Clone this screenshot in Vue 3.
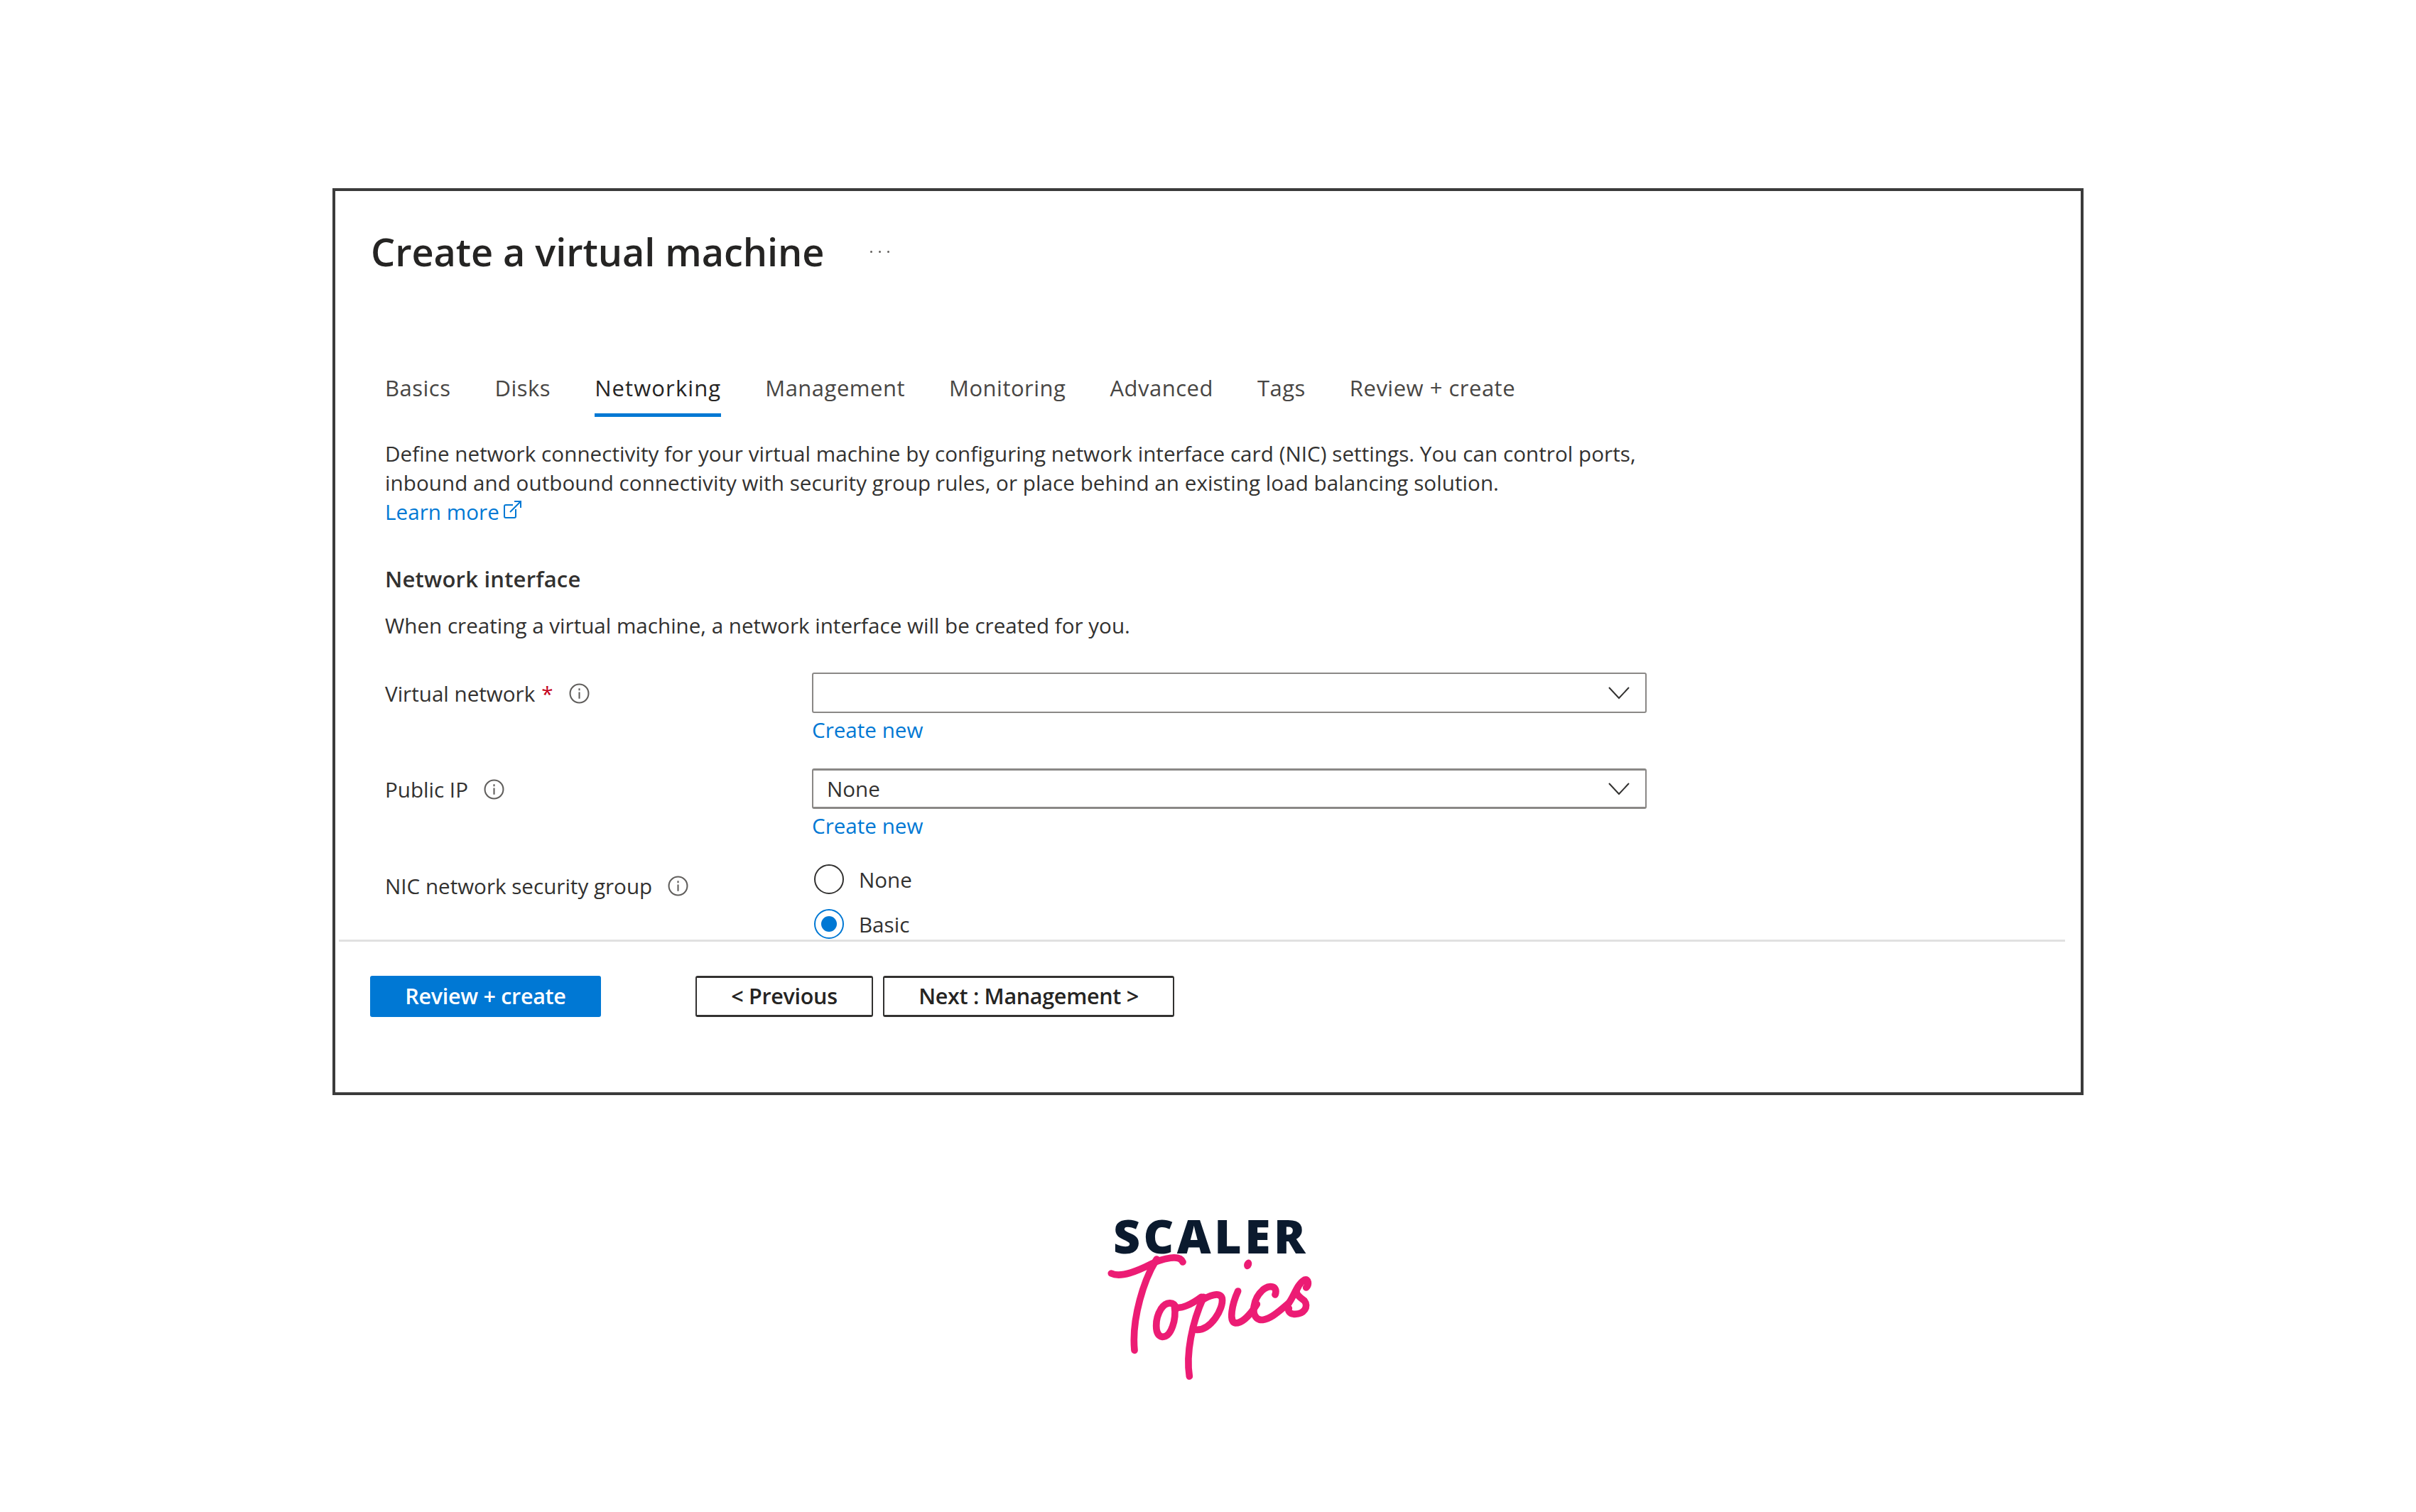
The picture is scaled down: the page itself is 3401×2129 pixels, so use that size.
<template>
  <div class="page">
    <div class="frame">
      <div class="title-row">
        <h1 class="title">Create a virtual machine</h1>
        <span class="more"><i></i><i></i><i></i></span>
      </div>

      <nav class="tabs">
        <span
          v-for="tab in tabs"
          :key="tab"
          class="tab"
          :class="{ active: tab === 'Networking' }"
        >{{ tab }}</span>
      </nav>

      <div class="scroll">
        <p class="intro">
          Define network connectivity for your virtual machine by configuring network interface card (NIC) settings. You can control ports,<br />
          inbound and outbound connectivity with security group rules, or place behind an existing load balancing solution.<br />
          <a class="link">Learn more</a>
          <svg class="ext" viewBox="0 0 25 25" fill="none" stroke="#0078d4" stroke-width="2">
            <path d="M13 6H3a2 2 0 0 0-2 2v14a2 2 0 0 0 2 2h12a2 2 0 0 0 2-2V12" />
            <path d="M9 16 23 2M15 1h9v9" />
          </svg>
        </p>

        <h2 class="section">Network interface</h2>
        <p class="section-note">When creating a virtual machine, a network interface will be created for you.</p>

        <div class="row first">
          <div class="label">
            Virtual network <span class="star">*</span>
            <svg class="info" viewBox="0 0 28 28" fill="none" stroke="#605e5c" stroke-width="2">
              <circle cx="14" cy="14" r="12.5" />
              <path d="M14 12v9M14 7v3" />
            </svg>
          </div>
          <div class="control">
            <div class="select">
              <span></span>
              <svg class="chev" viewBox="0 0 30 18" fill="none" stroke="#323130" stroke-width="2">
                <path d="M1 1l14 15L29 1" />
              </svg>
            </div>
            <a class="link create">Create new</a>
          </div>
        </div>

        <div class="row second">
          <div class="label">
            Public IP
            <svg class="info" viewBox="0 0 28 28" fill="none" stroke="#605e5c" stroke-width="2">
              <circle cx="14" cy="14" r="12.5" />
              <path d="M14 12v9M14 7v3" />
            </svg>
          </div>
          <div class="control">
            <div class="select heavy">
              <span>None</span>
              <svg class="chev" viewBox="0 0 30 18" fill="none" stroke="#323130" stroke-width="2">
                <path d="M1 1l14 15L29 1" />
              </svg>
            </div>
            <a class="link create">Create new</a>
          </div>
        </div>

        <div class="row third">
          <div class="label radio-label">
            NIC network security group
            <svg class="info" viewBox="0 0 28 28" fill="none" stroke="#605e5c" stroke-width="2">
              <circle cx="14" cy="14" r="12.5" />
              <path d="M14 12v9M14 7v3" />
            </svg>
          </div>
          <div class="radios">
            <div class="radio"><span class="dot"></span>None</div>
            <div class="radio on"><span class="dot"></span>Basic</div>
          </div>
        </div>
      </div>

      <div class="footer">
        <button class="btn primary">Review + create</button>
        <button class="btn prev">&lt; Previous</button>
        <button class="btn next">Next : Management &gt;</button>
      </div>
    </div>

    <div class="logo">
      <div class="scaler">SCALER</div>
      <svg class="topics" viewBox="0 0 1080 660" fill="none" stroke="#ec1c74" stroke-width="29" stroke-linecap="round" stroke-linejoin="round">
        <path d="M130 90C170 110 240 80 300 50C350 25 420 10 432 42" />
        <path d="M322 30C270 110 215 280 228 415" />
        <path d="M405 240C395 205 360 210 340 240C315 280 310 350 345 358C385 360 405 280 397 230C420 245 470 220 510 190" />
        <path d="M520 190C470 300 445 430 460 525" />
        <path d="M510 205C540 185 590 165 598 195C605 240 550 330 490 328" />
        <path d="M665 165C640 220 625 295 655 300C685 300 720 260 745 220" />
        <ellipse cx="707" cy="52" rx="16" ry="21" transform="rotate(20 707 52)" fill="#ec1c74" stroke="none" />
        <path d="M822 180C835 145 800 135 770 160C730 195 715 270 755 285C790 295 840 250 880 215" />
        <path d="M880 215C900 190 915 135 945 118C965 110 965 140 953 150" />
        <path d="M918 150C900 175 925 190 945 205C965 230 945 265 900 262C885 260 875 250 880 238" />
      </svg>
    </div>
  </div>
</template>

<script setup>
const tabs = [
  'Basics',
  'Disks',
  'Networking',
  'Management',
  'Monitoring',
  'Advanced',
  'Tags',
  'Review + create',
]
</script>

<style>
html,
body {
  margin: 0;
  background: #fff;
}
</style>

<style scoped>
.page {
  width: 3401px;
  height: 2129px;
  padding-top: 265px;
  box-sizing: border-box;
  display: flex;
  flex-direction: column;
  align-items: center;
  overflow: hidden;
  background: #fff;
  font-family: "Open Sans", sans-serif;
  color: #323130;
}

.frame {
  width: 2465px;
  height: 1277px;
  box-sizing: border-box;
  border: 4px solid #3b3b3b;
  display: flex;
  flex-direction: column;
}

.title-row {
  margin-top: 45px;
  padding-left: 50px;
  height: 80px;
  display: flex;
  align-items: center;
}

.title {
  margin: 0;
  font-size: 54px;
  font-weight: 600;
  letter-spacing: -0.05px;
  color: #252423;
}

.more {
  margin-left: 65px;
  display: flex;
  gap: 9px;
}

.more i {
  width: 3px;
  height: 3px;
  border-radius: 50%;
  background: #605e5c;
}

.tabs {
  margin: 131px 0 0 70px;
  display: flex;
  gap: 62px;
}

.tab {
  font-size: 31px;
  line-height: 42px;
  padding-bottom: 15px;
  border-bottom: 5px solid transparent;
  letter-spacing: 0.5px;
  color: #484644;
}

.tab.active {
  border-bottom-color: #0078d4;
  color: #252423;
  letter-spacing: 1.1px;
}

.scroll {
  flex: 1;
  min-height: 0;
  overflow: hidden;
  padding-left: 70px;
}

.intro {
  margin: 31px 0 0;
  font-size: 29.6px;
  line-height: 41px;
  letter-spacing: 0.05px;
}

.link {
  color: #0078d4;
}

.ext {
  width: 25px;
  height: 25px;
  margin-left: 6px;
  vertical-align: 2px;
}

.section {
  margin: 53px 0 0;
  font-size: 31px;
  font-weight: 600;
  line-height: 42px;
  letter-spacing: 0.2px;
  color: #323130;
}

.section-note {
  margin: 24px 0 0;
  font-size: 29.6px;
  line-height: 41px;
}

.row {
  display: grid;
  grid-template-columns: 601px 1175px;
  margin-top: 32px;
  font-size: 29.6px;
  line-height: 41px;
}

.row.first {
  margin-top: 46px;
}

.row.second {
  margin-top: 34px;
}

.row.third {
  margin-top: 34px;
}

.label {
  padding-top: 9px;
  display: flex;
  align-items: flex-start;
}

.radio-label {
  padding-top: 10px;
}

.star {
  color: #c4001a;
  margin-left: 9px;
}

.info {
  width: 29px;
  height: 29px;
  margin: 6px 0 0 22px;
}

.select {
  height: 57px;
  box-sizing: border-box;
  border: 2px solid #8a8886;
  border-radius: 3px;
  display: flex;
  align-items: center;
  justify-content: space-between;
  padding: 0 22px 0 19px;
}

.select.heavy {
  border-width: 3px 2px;
}

.chev {
  width: 30px;
  height: 18px;
}

.create {
  display: block;
  margin-top: 3px;
}

.radios {
  display: flex;
  flex-direction: column;
  gap: 21px;
}

.radio {
  height: 42px;
  display: flex;
  align-items: center;
  gap: 21px;
  margin-left: 3px;
}

.dot {
  width: 42px;
  height: 42px;
  box-sizing: border-box;
  border: 2px solid #323130;
  border-radius: 50%;
  display: flex;
  align-items: center;
  justify-content: center;
}

.radio.on .dot {
  border-color: #0078d4;
}

.radio.on .dot::after {
  content: "";
  width: 22px;
  height: 22px;
  border-radius: 50%;
  background: #0078d4;
}

.footer {
  height: 215px;
  box-sizing: border-box;
  margin: 0 22px 0 5px;
  border-top: 3px solid #e1e1e1;
  padding: 48px 0 0 44px;
  display: flex;
  align-items: flex-start;
}

.btn {
  height: 58px;
  box-sizing: border-box;
  border-radius: 3px;
  font-family: inherit;
  font-size: 30.5px;
  font-weight: 600;
  letter-spacing: -0.3px;
  line-height: 50px;
  background: #fff;
  color: #252423;
  border: 2px solid #323130;
  border-top-width: 3px;
  border-bottom-width: 3px;
  padding: 0 0 2px;
}

.primary {
  width: 325px;
  background: #0078d4;
  border: none;
  color: #fff;
}

.prev {
  width: 250px;
  margin-left: 133px;
}

.next {
  width: 410px;
  margin-left: 14px;
}

.logo {
  margin-top: 174px;
  width: 360px;
  display: flex;
  flex-direction: column;
  align-items: center;
}

.scaler {
  font-size: 66px;
  font-weight: 800;
  line-height: 47px;
  letter-spacing: 4.5px;
  color: #0b1a2e;
  padding-left: 8px;
}

.topics {
  width: 360px;
  height: 220px;
  margin-top: 0;
}
</style>
